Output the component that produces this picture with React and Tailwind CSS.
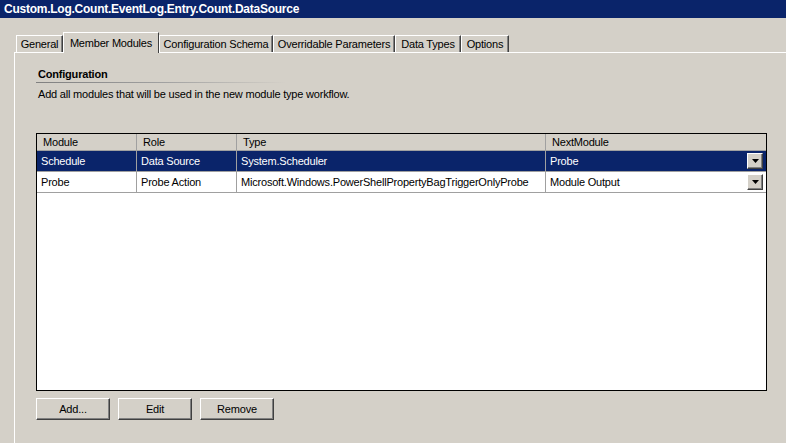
import React from "react";

const tabs = [
  { name: "General", w: "w-[47px]" },
  { name: "Member Modules", w: "w-[96px]", active: true },
  { name: "Configuration Schema", w: "w-[114px]" },
  { name: "Overridable Parameters", w: "w-[122px]" },
  { name: "Data Types", w: "w-[66px]" },
  { name: "Options", w: "w-[48px]" },
];

const rows = [
  { module: "Schedule", role: "Data Source", type: "System.Scheduler", next: "Probe", selected: true },
  {
    module: "Probe",
    role: "Probe Action",
    type: "Microsoft.Windows.PowerShellPropertyBagTriggerOnlyProbe",
    next: "Module Output",
  },
];

const DropButton = () => (
  <div className="w-[16px] h-[16px] bg-[#d4d0c8] border border-t-white border-l-white border-r-[#404040] border-b-[#404040] shadow-[inset_-1px_-1px_0_#808080] flex items-center justify-center">
    <svg width="7" height="4" viewBox="0 0 7 4">
      <path d="M0 0h7L3.5 4z" fill="#000" />
    </svg>
  </div>
);

const Button = ({ label }) => (
  <button className="w-[74px] h-[22px] bg-[#d4d0c8] border border-t-white border-l-white border-r-[#404040] border-b-[#404040] shadow-[inset_-1px_-1px_0_#808080] text-[11px] text-black">
    {label}
  </button>
);

export default function App() {
  return (
    <div
      className="w-[786px] h-[443px] bg-[#d4d0c8] overflow-hidden text-[11px] tracking-[-0.2px] text-black"
      style={{ fontFamily: '"Liberation Sans", Arial, sans-serif' }}
    >
      <div className="h-[18px] bg-[#0a246a] text-white font-bold text-[12px] tracking-[-0.25px] leading-[18px] pl-[4px]">
        Custom.Log.Count.EventLog.Entry.Count.DataSource
      </div>

      {/* tab strip */}
      <div className="flex items-end pl-[16px] pt-[14px] h-[34px]">
        {tabs.map((t) =>
          t.active ? (
            <div
              key={t.name}
              className={`${t.w} h-[21px] -mb-[1px] relative z-10 bg-[#d4d0c8] border-t border-l border-white border-r border-r-[#404040] flex items-start justify-center pt-[2px]`}
            >
              {t.name}
            </div>
          ) : (
            <div
              key={t.name}
              className={`${t.w} h-[17px] bg-[#d4d0c8] border-t border-l border-white border-r border-r-[#404040] shadow-[inset_-1px_0_0_#808080] flex items-center justify-center`}
            >
              {t.name}
            </div>
          )
        )}
      </div>

      {/* tab panel */}
      <div className="ml-[14px] w-[900px] h-[400px] border-t border-l border-white pl-[21px] pt-[13px]">
        <div className="font-bold pl-[2px] h-[16px] leading-[16px]">Configuration</div>
        <div className="h-px w-[250px] bg-gradient-to-r from-[#808080] via-[#a0a0a0] to-[#d4d0c8]" />
        <div className="pl-[2px] mt-[4px] leading-[14px]">
          Add all modules that will be used in the new module type workflow.
        </div>

        {/* grid */}
        <div className="mt-[32px] w-[731px] h-[258px] bg-white border border-black">
          <div className="flex h-[17px] bg-[#d4d0c8] border-b border-[#a0a0a0]">
            <div className="w-[100px] pl-[6px] leading-[17px] border-r border-[#a0a0a0]">Module</div>
            <div className="w-[100px] pl-[6px] leading-[17px] border-r border-[#a0a0a0]">Role</div>
            <div className="w-[309px] pl-[6px] leading-[17px] border-r border-[#a0a0a0]">Type</div>
            <div className="flex-1 pl-[6px] leading-[17px]">NextModule</div>
          </div>
          {rows.map((r) => (
            <div
              key={r.module}
              className={`flex h-[21px] border-b border-[#a0a0a0] ${r.selected ? "bg-[#0a246a] text-white" : "bg-white"}`}
            >
              <div className="w-[100px] pl-[4px] leading-[20px] border-r border-[#a0a0a0]">{r.module}</div>
              <div className="w-[100px] pl-[4px] leading-[20px] border-r border-[#a0a0a0]">{r.role}</div>
              <div className="w-[309px] pl-[4px] leading-[20px] border-r border-[#a0a0a0] whitespace-nowrap overflow-hidden">
                {r.type}
              </div>
              <div className="flex-1 pl-[4px] pr-[3px] flex items-center justify-between">
                <span>{r.next}</span>
                <DropButton />
              </div>
            </div>
          ))}
        </div>

        <div className="flex gap-[8px] mt-[7px]">
          <Button label="Add..." />
          <Button label="Edit" />
          <Button label="Remove" />
        </div>
      </div>
    </div>
  );
}
